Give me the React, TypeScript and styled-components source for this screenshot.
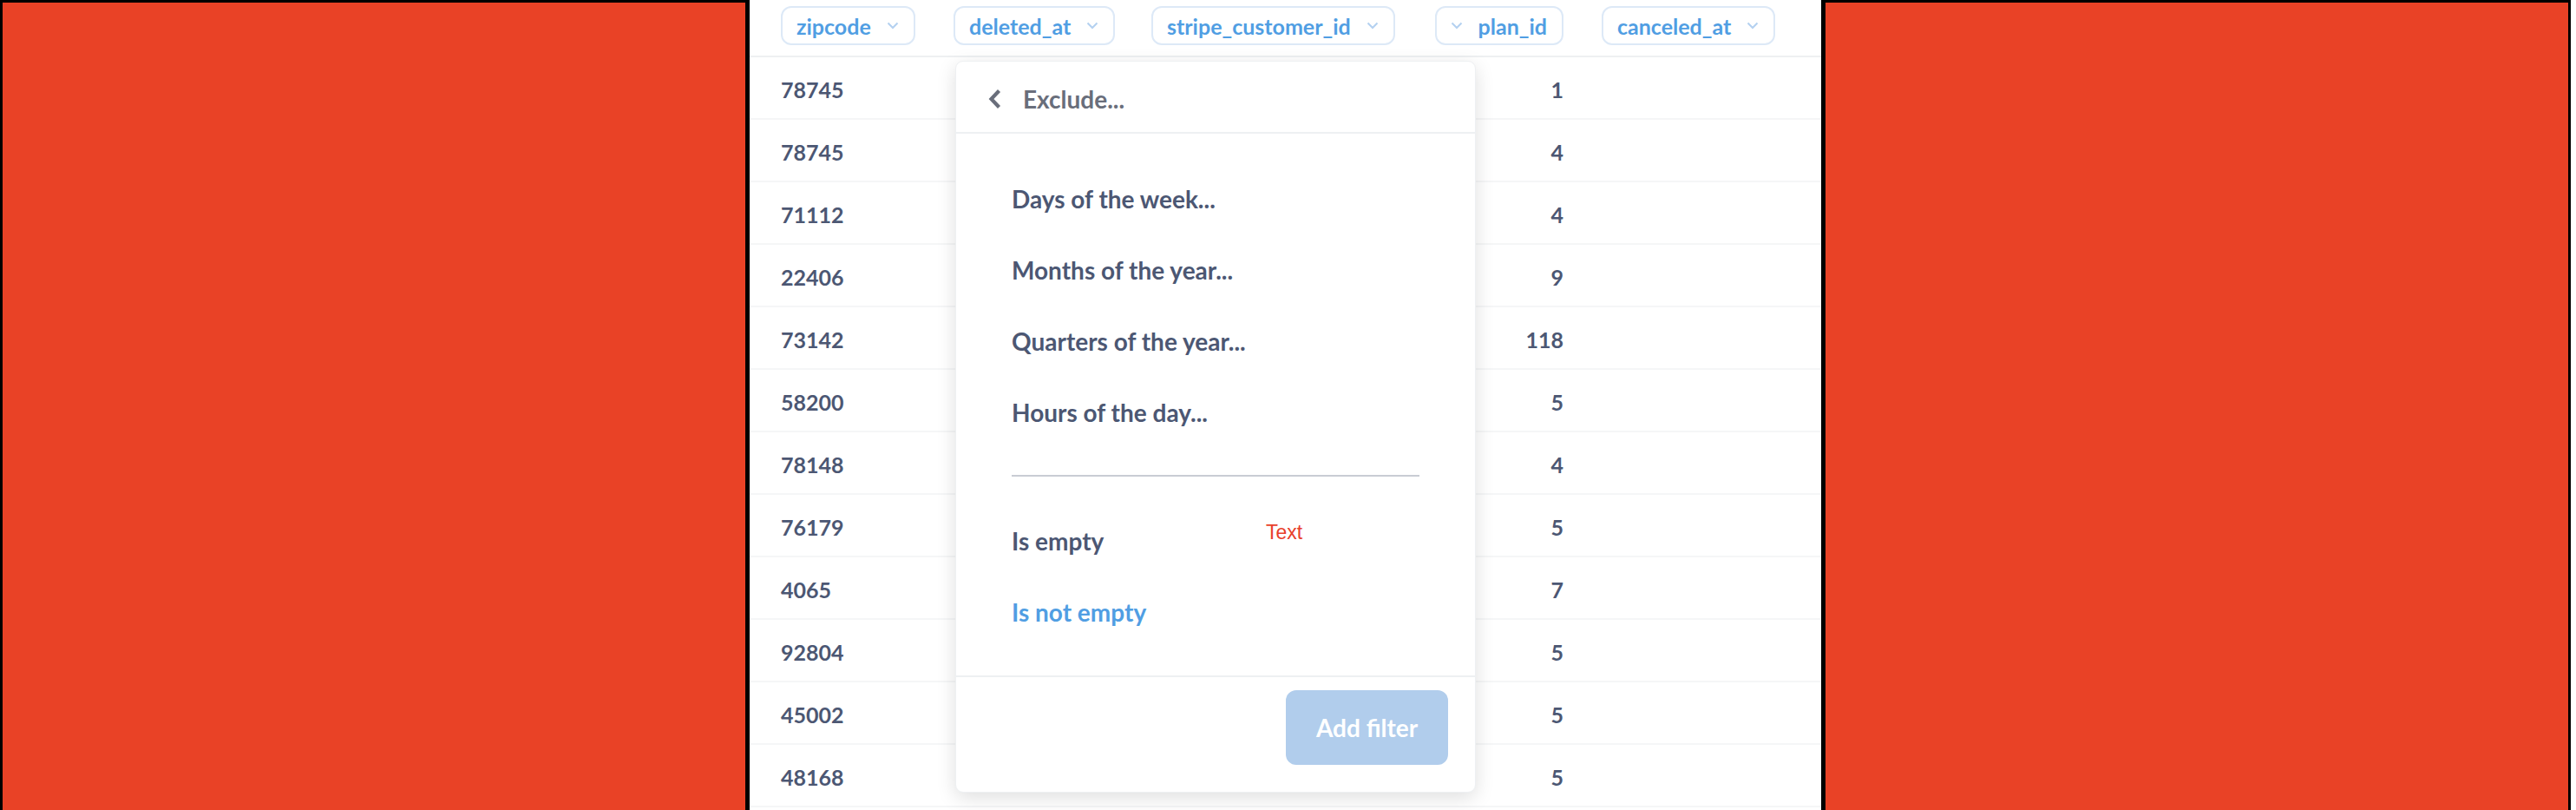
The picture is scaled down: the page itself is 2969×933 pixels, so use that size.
import styled, { createGlobalStyle } from 'styled-components'

const GlobalStyle = createGlobalStyle`
  html, body {
    margin: 0;
    padding: 0;
    background: #fff;
  }
  body {
    font-family: Lato, "Open Sans", sans-serif;
  }
`

const Page = styled.div`
  display: flex;
  width: 2969px;
  height: 933px;
  overflow: hidden;
`

const Mask = styled.div<{ side: 'left' | 'right' }>`
  flex: 0 0 864px;
  box-sizing: border-box;
  height: 100%;
  background: #e94226;
  border-top: 3px solid #000;
  border-left: ${({ side }) => (side === 'left' ? '3px' : '5px')} solid #000;
  border-right: ${({ side }) => (side === 'left' ? '5px' : '3px')} solid #000;
`

const Sliver = styled.div`
  flex: 1;
  background: #fff;
`

const TableArea = styled.div`
  position: relative;
  flex: 0 0 1235px;
  height: 100%;
  background: #fff;
`

const Grid = styled.div`
  display: grid;
  grid-template-columns: 213px 228px 324px 195px 1fr;
`

const HeaderCell = styled.div<{ first?: boolean; right?: boolean }>`
  box-sizing: border-box;
  height: 66px;
  padding: 7px 22px 0 ${({ first }) => (first ? '36px' : '22px')};
  display: flex;
  justify-content: ${({ right }) => (right ? 'flex-end' : 'flex-start')};
  align-items: flex-start;
  border-bottom: 2px solid #eef0f2;
`

const Pill = styled.div`
  box-sizing: border-box;
  height: 45px;
  display: flex;
  align-items: center;
  gap: 18px;
  padding: 0 17px 0 16px;
  border: 2px solid #dde9f7;
  border-radius: 12px;
  color: #509ee3;
  font-size: 25px;
  font-weight: 700;
  white-space: nowrap;
`

const Cell = styled.div<{ first?: boolean; right?: boolean }>`
  box-sizing: border-box;
  height: 72px;
  padding: 0 22px 0 ${({ first }) => (first ? '36px' : '22px')};
  display: flex;
  align-items: center;
  justify-content: ${({ right }) => (right ? 'flex-end' : 'flex-start')};
  border-bottom: 2px solid #f5f6f7;
  color: #4c5773;
  font-size: 25px;
  font-weight: 700;
  padding-top: 4px;
`

const Popover = styled.div`
  position: absolute;
  left: 237px;
  top: 70px;
  width: 600px;
  height: 843px;
  box-sizing: border-box;
  display: flex;
  flex-direction: column;
  background: #fff;
  border: 1px solid #eef0f2;
  border-radius: 9px;
  box-shadow: 0 6px 22px rgba(0, 0, 0, 0.13);
`

const PopHeader = styled.div`
  height: 83px;
  flex: 0 0 auto;
  box-sizing: border-box;
  display: flex;
  align-items: center;
  gap: 24px;
  padding: 4px 0 0 36px;
  border-bottom: 2px solid #eef0f2;
  color: #696e7b;
  font-size: 28px;
  font-weight: 700;
`

const PopBody = styled.div`
  position: relative;
  flex: 1;
  padding: 34px 64px 31px 64px;
  border-bottom: 2px solid #eef0f2;
`

const Option = styled.div<{ active?: boolean }>`
  height: 82px;
  display: flex;
  align-items: center;
  color: ${({ active }) => (active ? '#509ee3' : '#4c5773')};
  font-size: 28px;
  font-weight: 700;
`

const Separator = styled.div`
  height: 2px;
  background: #c9ccd4;
  margin: 31px 0 33px;
`

const TagLabel = styled.span`
  position: absolute;
  left: 357px;
  top: 446px;
  color: #e8402a;
  font-family: "Liberation Sans", Arial, sans-serif;
  font-size: 23px;
`

const PopFooter = styled.div`
  flex: 0 0 auto;
  height: 132px;
  box-sizing: border-box;
  display: flex;
  justify-content: flex-end;
  align-items: flex-start;
  padding: 15px 31px 0 0;
`

const AddButton = styled.button`
  width: 187px;
  height: 86px;
  border: none;
  border-radius: 12px;
  background: #b1cdec;
  color: #fff;
  font-family: Lato, sans-serif;
  font-size: 28px;
  font-weight: 700;
`

const ChevronDown = () => (
  <svg width="14" height="9" viewBox="0 0 14 9">
    <polyline points="1.5,1.5 7,7 12.5,1.5" fill="none" stroke="#b4d1f0" strokeWidth="2" />
  </svg>
)

const ChevronLeft = () => (
  <svg width="17" height="24" viewBox="0 0 17 24">
    <polyline points="13.5,2.5 4.5,12 13.5,21.5" fill="none" stroke="#696e7b" strokeWidth="4.2" />
  </svg>
)

const columns = [
  { name: 'zipcode', right: false },
  { name: 'deleted_at', right: false },
  { name: 'stripe_customer_id', right: false },
  { name: 'plan_id', right: true },
  { name: 'canceled_at', right: false },
]

const rows: [string, string][] = [
  ['78745', '1'],
  ['78745', '4'],
  ['71112', '4'],
  ['22406', '9'],
  ['73142', '118'],
  ['58200', '5'],
  ['78148', '4'],
  ['76179', '5'],
  ['4065', '7'],
  ['92804', '5'],
  ['45002', '5'],
  ['48168', '5'],
  ['', ''],
]

const App = () => {
  return (
    <>
      <GlobalStyle />
      <Page>
        <Mask side="left" />
        <TableArea>
          <Grid>
            {columns.map((c, i) => (
              <HeaderCell key={c.name} first={i === 0} right={c.right}>
                <Pill>
                  {c.right && <ChevronDown />}
                  {c.name}
                  {!c.right && <ChevronDown />}
                </Pill>
              </HeaderCell>
            ))}
            {rows.map(([zip, plan], r) => (
              [
                <Cell key={`${r}-0`} first>{zip}</Cell>,
                <Cell key={`${r}-1`} />,
                <Cell key={`${r}-2`} />,
                <Cell key={`${r}-3`} right>{plan}</Cell>,
                <Cell key={`${r}-4`} />,
              ]
            ))}
          </Grid>

          <Popover>
            <PopHeader>
              <ChevronLeft />
              Exclude...
            </PopHeader>
            <PopBody>
              <Option>Days of the week...</Option>
              <Option>Months of the year...</Option>
              <Option>Quarters of the year...</Option>
              <Option>Hours of the day...</Option>
              <Separator />
              <Option>Is empty</Option>
              <Option active>Is not empty</Option>
              <TagLabel>Text</TagLabel>
            </PopBody>
            <PopFooter>
              <AddButton>Add filter</AddButton>
            </PopFooter>
          </Popover>
        </TableArea>
        <Mask side="right" />
        <Sliver />
      </Page>
    </>
  )
}

export default App
